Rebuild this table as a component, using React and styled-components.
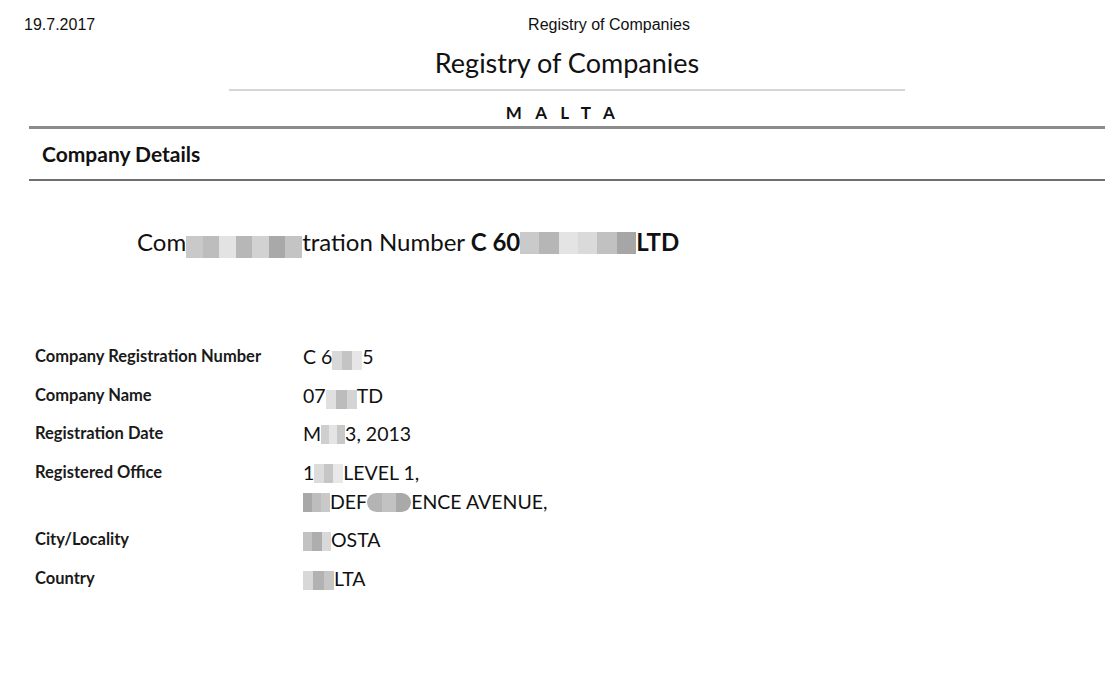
import React from "react";
import styled, { createGlobalStyle } from "styled-components";

const GlobalStyle = createGlobalStyle`
    body {
        margin: 0;
        background: #fff;
        color: #111;
        font-family: "Lato", "Liberation Sans", sans-serif;
    }
`;

const PrintHeader = styled.div`
    display: flex;
    align-items: center;
    height: 18px;
    padding: 16px 0 0 24px;
    font-family: "Liberation Sans", Arial, sans-serif;
    font-size: 16px;
    color: #111;
`;

const PrintDate = styled.span`
    width: 70px;
`;

const PrintTitle = styled.span`
    flex: 1;
    text-align: center;
    padding-left: 11px;
`;

const Page = styled.div`
    padding: 0 8px 0 29px;
`;

const Masthead = styled.div`
    display: flex;
    flex-direction: column;
    align-items: center;
`;

const Title = styled.h1`
    margin: 12px 0 0;
    font-size: 27px;
    font-weight: 400;
    line-height: 34px;
`;

const ThinRule = styled.div`
    width: 676px;
    height: 2px;
    margin-top: 9px;
    background: #d6d6d6;
`;

const Country = styled.div`
    margin-top: 12px;
    font-size: 17px;
    font-weight: 700;
    letter-spacing: 0.78em;
    line-height: 20px;
`;

const Rule = styled.div`
    height: ${(p) => p.$h}px;
    background: ${(p) => p.$color};
    margin-top: ${(p) => p.$top}px;
`;

const SectionTitle = styled.h2`
    margin: 0;
    padding: 12px 0 0 13px;
    height: 38px;
    font-size: 21px;
    font-weight: 700;
    line-height: 26px;
`;

const Lead = styled.p`
    margin: 47px 0 0;
    padding-left: 108px;
    font-size: 24px;
    line-height: 28px;
    white-space: nowrap;

    strong {
        font-weight: 700;
    }
`;

const Table = styled.div`
    display: grid;
    grid-template-columns: 268px 1fr;
    row-gap: 9.5px;
    margin-top: 84px;
    padding-left: 6px;
`;

const Label = styled.div`
    font-size: 16.5px;
    font-weight: 700;
    line-height: 29px;
    color: #1a1a1a;
`;

const Value = styled.div`
    font-size: 19.5px;
    line-height: 29px;
    white-space: nowrap;
`;

const gradient = (shades) => {
    const step = 100 / shades.length;
    return shades
        .map((c, i) => `${c} ${(i * step).toFixed(2)}%, ${c} ${((i + 1) * step).toFixed(2)}%`)
        .join(", ");
};

const Redact = styled.span`
    display: inline-block;
    vertical-align: ${(p) => p.$drop || 0}px;
    width: ${(p) => p.$w}px;
    height: ${(p) => p.$h || 19}px;
    border-radius: ${(p) => (p.$round ? "10px" : "0")};
    background: linear-gradient(90deg, ${(p) => gradient(p.$shades)});
`;

const rows = [
    {
        label: "Company Registration Number",
        value: (
            <>
                C 6<Redact $w={30} $drop={-6} $shades={["#d8d8d8", "#c4c4c4", "#e6e6e6"]} />5
            </>
        ),
    },
    {
        label: "Company Name",
        value: (
            <>
                07<Redact $w={31} $drop={-6} $shades={["#e0e0e0", "#bcbcbc", "#d4d4d4"]} />TD
            </>
        ),
    },
    {
        label: "Registration Date",
        value: (
            <>
                M<Redact $w={24} $drop={-3} $shades={["#cfcfcf", "#e4e4e4", "#c8c8c8"]} />3, 2013
            </>
        ),
    },
    {
        label: "Registered Office",
        value: (
            <>
                1<Redact $w={29} $drop={-3} $shades={["#dcdcdc", "#c6c6c6", "#e8e8e8"]} />LEVEL 1,
                <br />
                <Redact $w={27} $drop={-3} $shades={["#a8a8a8", "#bdbdbd", "#c9c9c9"]} />DEF
                <Redact $w={44} $drop={-3} $round $shades={["#b4b4b4", "#c2c2c2", "#a9a9a9"]} />ENCE AVENUE,
            </>
        ),
    },
    {
        label: "City/Locality",
        value: (
            <>
                <Redact $w={28} $drop={-4} $shades={["#c2c2c2", "#aeaeae", "#d9d9d9"]} />OSTA
            </>
        ),
    },
    {
        label: "Country",
        value: (
            <>
                <Redact $w={31} $drop={-4} $shades={["#d8d8d8", "#b2b2b2", "#c6c6c6"]} />LTA
            </>
        ),
    },
];

const App = () => (
    <>
        <GlobalStyle />
        <PrintHeader>
            <PrintDate>19.7.2017</PrintDate>
            <PrintTitle>Registry of Companies</PrintTitle>
        </PrintHeader>
        <Page>
            <Masthead>
                <Title>Registry of Companies</Title>
                <ThinRule />
                <Country>MALTA</Country>
            </Masthead>
            <Rule $h={3} $color="#8b8b8b" $top={3} />
            <SectionTitle>Company Details</SectionTitle>
            <Rule $h={2} $color="#6f6f6f" $top={0} />
            <Lead>
                Com
                <Redact $w={116} $h={22} $drop={-7} $shades={["#c9c9c9", "#bdbdbd", "#e3e3e3", "#b7b7b7", "#d2d2d2", "#a9a9a9", "#c4c4c4"]} />
                tration Number{" "}
                <strong>
                    C 60
                    <Redact $w={116} $h={22} $drop={-3} $shades={["#cacaca", "#b6b6b6", "#e4e4e4", "#dadada", "#c1c1c1", "#a6a6a6"]} />
                    LTD
                </strong>
            </Lead>
            <Table>
                {rows.map((r) => (
                    <React.Fragment key={r.label}>
                        <Label>{r.label}</Label>
                        <Value>{r.value}</Value>
                    </React.Fragment>
                ))}
            </Table>
        </Page>
    </>
);

export default App;
